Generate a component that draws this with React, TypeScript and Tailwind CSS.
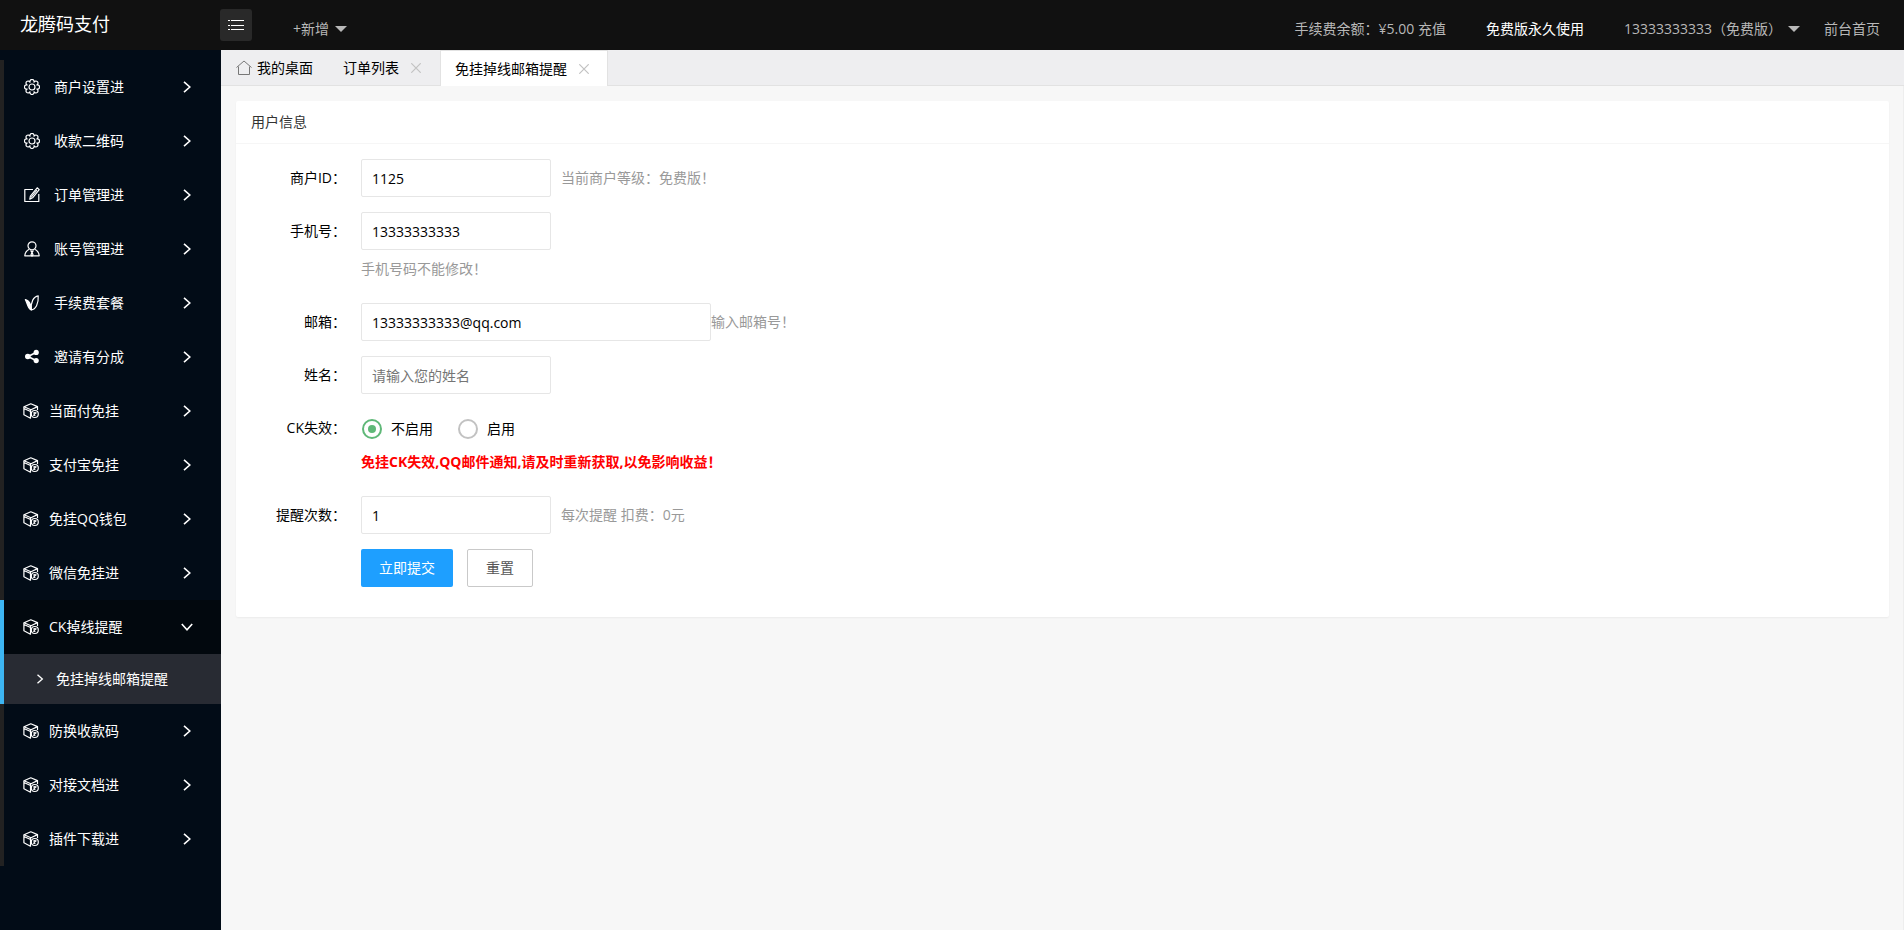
import React from 'react';

interface MenuItem {
  label: string;
  icon: 'gear' | 'edit' | 'user' | 'leaf' | 'share' | 'cube';
  children?: string[];
}

const menuItems: MenuItem[] = [
  { label: '商户设置进', icon: 'gear' },
  { label: '收款二维码', icon: 'gear' },
  { label: '订单管理进', icon: 'edit' },
  { label: '账号管理进', icon: 'user' },
  { label: '手续费套餐', icon: 'leaf' },
  { label: '邀请有分成', icon: 'share' },
  { label: '当面付免挂', icon: 'cube' },
  { label: '支付宝免挂', icon: 'cube' },
  { label: '免挂QQ钱包', icon: 'cube' },
  { label: '微信免挂进', icon: 'cube' },
  { label: 'CK掉线提醒', icon: 'cube', children: ['免挂掉线邮箱提醒'] },
  { label: '防换收款码', icon: 'cube' },
  { label: '对接文档进', icon: 'cube' },
  { label: '插件下载进', icon: 'cube' },
];

const MenuIcon: React.FC<{ name: MenuItem['icon'] }> = ({ name }) => (
  <svg
    className="h-4 w-4 shrink-0"
    viewBox="0 0 16 16"
    fill="none"
    stroke="currentColor"
    strokeWidth="1.2"
    strokeLinejoin="round"
    aria-hidden="true"
  >
    {name === 'gear' && (
      <>
        <path d="M12.8 10A2.1 2.1 0 1 1 10 12.8A2.1 2.1 0 1 1 6 12.8A2.1 2.1 0 1 1 3.2 10A2.1 2.1 0 1 1 3.2 6A2.1 2.1 0 1 1 6 3.2A2.1 2.1 0 1 1 10 3.2A2.1 2.1 0 1 1 12.8 6A2.1 2.1 0 1 1 12.8 10z" />
        <circle cx="8" cy="8" r="3" />
      </>
    )}
    {name === 'edit' && (
      <>
        <path d="M9 2.500H.8v12h14V7" />
        <path d="M13.200.8 15.200 2.600 8.600 10.800 5.800 12.200 6.400 9.200z" />
        <path d="M7 10.500 13 3" />
      </>
    )}
    {name === 'user' && (
      <>
        <circle cx="8" cy="4.800" r="4" />
        <path d="M5.300 8.200C2.500 9.500 1 12 .8 14.800h14.400C15 12 13.500 9.500 10.700 8.200" />
        <path d="M6.500 9.500 8 11l1.500-1.500M8 11l-1 3 1 1 1-1z" />
      </>
    )}
    {name === 'leaf' && (
      <>
        <path d="M14.200.8C9.500 1.500 6.600 7 7.300 14.800 11.500 14.500 14.800 9 14.200.8z" />
        <path d="M1.400 4.600c2.200.4 4 2.200 5.300 5.600l.6 4.600C4 14.400 3.600 8.600 1.400 4.600z" fill="currentColor" />
      </>
    )}
    {name === 'share' && (
      <>
        <path d="M4 7.500 12 3.500M4 7.500l8 4" strokeWidth="1.8" />
        <circle cx="3.800" cy="7.500" r="2.800" fill="currentColor" stroke="none" />
        <circle cx="12.200" cy="3.400" r="2.600" fill="currentColor" stroke="none" />
        <circle cx="12.200" cy="11.600" r="2.600" fill="currentColor" stroke="none" />
      </>
    )}
    {name === 'cube' && (
      <>
        <path d="M7.800.8 14.500 3.600 8 6.800 1 3.800z" />
        <path d="M.9 3.800v8L7.500 15.200V6.800M14.500 3.600V7M1 5.500l6.500 3" />
        <circle cx="11.800" cy="11" r="3.500" />
        <path d="M10.200 12.600 13.400 9.400M10 10h3.600M11.800 9v4" />
      </>
    )}
  </svg>
);

const Chevron: React.FC<{ className?: string }> = ({ className = '' }) => (
  <svg className={className} viewBox="0 0 12 12" fill="none" stroke="currentColor" strokeWidth="1.6" aria-hidden="true">
    <path d="M3 .8 8.800 6 3 11.200" />
  </svg>
);

const Caret = () => (
  <svg className="h-[6px] w-3 shrink-0" viewBox="0 0 12 6" fill="currentColor" aria-hidden="true">
    <path d="M0 0h12L6 6z" />
  </svg>
);

const CloseIcon = () => (
  <svg
    className="h-[10px] w-[10px]"
    viewBox="0 0 10 10"
    fill="none"
    stroke="currentColor"
    strokeWidth="1.2"
    aria-hidden="true"
  >
    <path d="M.3.3l9.400 9.400M9.700.3L.3 9.700" />
  </svg>
);

const Header = () => (
  <header className="flex h-[50px] shrink-0 bg-[#111111] text-[#b8b8b8]">
    <a href="#" className="w-[220px] shrink-0 pl-5 text-lg leading-[48px] text-white">
      龙腾码支付
    </a>
    <button
      type="button"
      aria-label="切换菜单"
      className="mt-[9px] flex h-8 w-8 shrink-0 cursor-pointer items-center justify-center rounded-[3px] bg-[#292929] text-white"
    >
      <svg className="h-4 w-4" viewBox="0 0 16 16" stroke="currentColor" aria-hidden="true">
        <path d="M0 3.500h2M3 3.500h13M0 8.500h2M3 8.500h13M0 12.500h2M3 12.500h13" />
      </svg>
    </button>
    <nav className="flex flex-1 items-center justify-between pt-[7px] pl-[41px] pr-6">
      <a href="#" className="flex items-center gap-[6px]">
        +新增
        <Caret />
      </a>
      <div className="flex items-center">
        <a href="#">手续费余额：¥5.00 充值</a>
        <a href="#" className="ml-10 text-white">免费版永久使用</a>
        <a href="#" className="ml-10 flex items-center gap-[6px]">
          13333333333（免费版）
          <Caret />
        </a>
        <a href="#" className="ml-6">前台首页</a>
      </div>
    </nav>
  </header>
);

const Sidebar = () => (
  <aside className="w-[221px] shrink-0 bg-[#020c17] pt-[10px] text-white">
    <ul>
      {menuItems.map((item) => (
        <li
          key={item.label}
          className={item.children ? 'border-l-4 border-[#3db5f2]' : 'border-l-4 border-[#222222]'}
        >
          <a
            href="#"
            className={`flex h-[54px] items-center pr-7 ${item.icon === 'cube' ? 'gap-[10px] pl-[19px]' : 'gap-[14px] pl-5'} ${
              item.children ? 'bg-[#02080e]' : ''
            }`}
          >
            <MenuIcon name={item.icon} />
            <span className="flex-1">{item.label}</span>
            <Chevron className={item.children ? 'h-3 w-3 shrink-0 rotate-90' : 'h-3 w-3 shrink-0'} />
          </a>
          {item.children?.map((child) => (
            <a key={child} href="#" className="flex h-[50px] items-center gap-[11px] bg-[#282b33] pl-[31px]">
              <Chevron className="h-[10px] w-[10px]" />
              {child}
            </a>
          ))}
        </li>
      ))}
    </ul>
  </aside>
);

const TabBar = () => (
  <div className="flex h-9 shrink-0 border-b border-[#e2e2e2] bg-[#eeeef0] text-black">
    <a href="#" className="flex items-center gap-[5px] pl-[15px]">
      <svg className="h-4 w-4 text-[#777777]" viewBox="0 0 16 16" fill="none" stroke="currentColor" aria-hidden="true">
        <path d="M.5 7.500 8 1l7.500 6.500M2.500 6.500v8h11v-8" />
      </svg>
      我的桌面
    </a>
    <div className="flex items-center gap-3 pl-[30px] pr-[19px]">
      <a href="#">订单列表</a>
      <button type="button" aria-label="关闭订单列表" className="cursor-pointer text-[#c2c2c2]">
        <CloseIcon />
      </button>
    </div>
    <div className="-mb-px flex items-center gap-3 border-x border-t border-[#e2e2e2] bg-white pl-[14px] pr-[18px]">
      <a href="#">免挂掉线邮箱提醒</a>
      <button type="button" aria-label="关闭免挂掉线邮箱提醒" className="cursor-pointer text-[#c2c2c2]">
        <CloseIcon />
      </button>
    </div>
  </div>
);

interface FieldProps {
  id: string;
  label: string;
  value?: string;
  placeholder?: string;
  wide?: boolean;
  hint?: string;
}

const Field: React.FC<FieldProps> = ({ id, label, value, placeholder, wide = false, hint }) => (
  <div className="flex items-center">
    <label htmlFor={id} className="w-[110px] shrink-0 pr-[15px] text-right text-black">
      {label}
    </label>
    <input
      id={id}
      type="text"
      defaultValue={value}
      placeholder={placeholder}
      className={`h-[38px] rounded-[2px] border border-[#e6e6e6] bg-white pl-[10px] text-black outline-none placeholder:text-[#757575] ${
        wide ? 'w-[350px]' : 'mr-[10px] w-[190px]'
      }`}
    />
    {hint && <span className="text-[#999999]">{hint}</span>}
  </div>
);

const RadioOption: React.FC<{ label: string; checked?: boolean }> = ({ label, checked = false }) => (
  <label className="flex cursor-pointer items-center gap-[9px] text-black">
    <input
      type="radio"
      name="ckNotify"
      defaultChecked={checked}
      className="h-5 w-5 appearance-none rounded-full border-2 border-[#c2c2c2] bg-white bg-clip-content p-1 checked:border-[#5fb878] checked:bg-[#5fb878]"
    />
    {label}
  </label>
);

const UserForm = () => (
  <section className="rounded-[2px] bg-white shadow-[0_1px_2px_0_rgba(0,0,0,0.05)]">
    <h2 className="h-[43px] border-b border-[#f6f6f6] px-[15px] leading-[42px] text-[#333333]">用户信息</h2>
    <form className="flex flex-col gap-[15px] px-[15px] pt-[15px] pb-[30px]">
      <Field id="merchantId" label="商户ID：" value="1125" hint="当前商户等级：免费版！" />
      <div>
        <Field id="phone" label="手机号：" value="13333333333" />
        <p className="pl-[110px] leading-[38px] text-[#999999]">手机号码不能修改！</p>
      </div>
      <Field id="email" label="邮箱：" value="13333333333@qq.com" wide hint="输入邮箱号！" />
      <Field id="realName" label="姓名：" placeholder="请输入您的姓名" />
      <fieldset>
        <div className="flex h-[38px] items-center">
          <legend className="w-[110px] pr-[15px] text-right text-black">CK失效：</legend>
          <div className="flex gap-[25px] pt-[2px] pl-px">
            <RadioOption label="不启用" checked />
            <RadioOption label="启用" />
          </div>
        </div>
        <p className="pb-1 pl-[110px] leading-[30px] font-bold text-[#ff0000]">
          免挂CK失效,QQ邮件通知,请及时重新获取,以免影响收益！
        </p>
      </fieldset>
      <Field id="times" label="提醒次数：" value="1" hint="每次提醒 扣费：0元" />
      <div className="flex gap-[14px] pl-[110px]">
        <button type="submit" className="h-[38px] cursor-pointer rounded-[2px] bg-[#1e9fff] px-[18px] text-white">
          立即提交
        </button>
        <button
          type="reset"
          className="h-[38px] cursor-pointer rounded-[2px] border border-[#c9c9c9] bg-white px-[18px] text-[#555555]"
        >
          重置
        </button>
      </div>
    </form>
  </section>
);

const App = () => (
  <div className="flex min-h-screen flex-col bg-[#f7f7f7] font-['Open_Sans','Noto_Sans_CJK_SC',sans-serif] text-sm">
    <Header />
    <div className="flex flex-1">
      <Sidebar />
      <main className="flex min-w-0 flex-1 flex-col">
        <TabBar />
        <div className="flex-1 border-r border-[#eeeeee] py-[15px] pr-[14px] pl-[15px]">
          <UserForm />
        </div>
      </main>
    </div>
  </div>
);

export default App;
